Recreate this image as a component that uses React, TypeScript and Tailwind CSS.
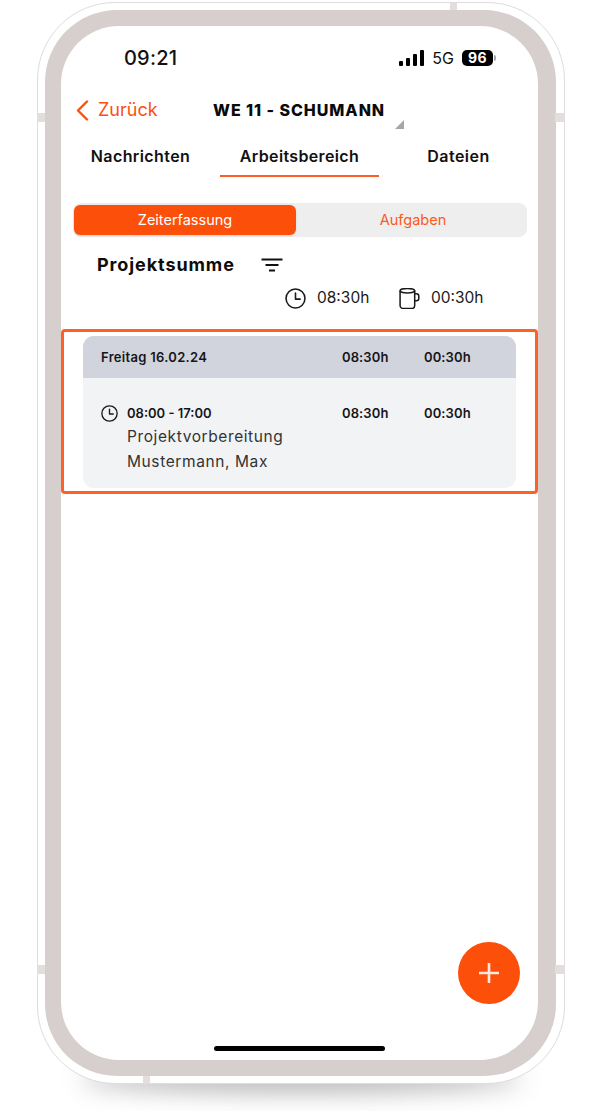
const inter = { fontFamily: 'Inter, "Noto Sans", sans-serif' };

function ClockIcon({ size, stroke = 1.6 }: { size: number; stroke?: number }) {
  return (
    <svg width={size} height={size} viewBox="0 0 20 20" fill="none" stroke="#1a1a1a" strokeWidth={stroke} strokeLinecap="round" strokeLinejoin="round">
      <circle cx="10" cy="10" r="9" />
      <path d="M10 4.8V10.6H14.4" />
    </svg>
  );
}

function MugIcon() {
  return (
    <svg width="21" height="21" viewBox="1 0.8 18.4 19.4" fill="none" stroke="#1a1a1a" strokeWidth="1.4" strokeLinecap="round" strokeLinejoin="round">
      <path d="M1.5 3.6C1.5 2 3.6 1.2 8.2 1.2S15 2 15 3.6V17c0 1.8-1.4 2.8-3.2 2.8H4.7C2.9 19.8 1.5 18.8 1.5 17V3.6Z" />
      <path d="M1.5 3.6C2.6 5 5 5.4 8.2 5.4S13.9 5 15 3.6" />
      <path d="M15 6.2h1.6c1.3 0 2.2.9 2.2 2.2v1.9c0 1.4-.9 2.3-2.2 2.3H15" />
    </svg>
  );
}

function FilterIcon() {
  return (
    <svg width="22" height="14" viewBox="0 0 22 14" fill="none" stroke="#111" strokeWidth="2">
      <path d="M0.5 1.5H21.5M4.5 7H17.5M8 12.5H14" />
    </svg>
  );
}

function SignalIcon() {
  return (
    <svg width="25" height="16" viewBox="0 0 25 16" fill="#000">
      <rect x="0" y="11" width="4" height="5" rx="1" />
      <rect x="7" y="8" width="4" height="8" rx="1" />
      <rect x="14" y="4" width="4" height="12" rx="1" />
      <rect x="21" y="0" width="4" height="16" rx="1" />
    </svg>
  );
}

function Times() {
  return (
    <div className="flex">
      <span className="w-[82px] text-[13px] font-semibold tracking-[0.1px] text-[#16161a]">08:30h</span>
      <span className="w-[92px] text-[13px] font-semibold tracking-[0.1px] text-[#16161a]">00:30h</span>
    </div>
  );
}

export default function App() {
  return (
    <div className="relative h-[1111px] w-[602px] overflow-hidden bg-white" style={inter}>
      {/* shadow under the phone */}
      <div className="absolute left-[80px] top-[1066px] h-[26px] w-[442px] rounded-[50%] bg-[#0000004d] blur-[12px]" />

      <div className="relative ml-[37px] mt-[2px] h-[1082px] w-[528px] rounded-[78px] border border-[#dedcdc] bg-white pb-[7px] pl-[7px] pr-[8px] pt-[7px]">
        {/* antenna bands */}
        <div className="absolute -left-px top-[110px] h-[9px] w-[8px] bg-[#e3dddc]" />
        <div className="absolute -right-px top-[110px] h-[9px] w-[10px] bg-[#e3dddc]" />
        <div className="absolute -left-px top-[962px] h-[9px] w-[8px] bg-[#e3dddc]" />
        <div className="absolute -right-px top-[962px] h-[9px] w-[10px] bg-[#e3dddc]" />
        <div className="absolute left-[412px] -top-px h-[8px] w-[7px] bg-[#e3dddc]" />
        <div className="absolute left-[105px] -bottom-px h-[8px] w-[7px] bg-[#e3dddc]" />

        <div className="h-full rounded-[72px] bg-[#d7cfce] pb-[16px] pl-[16px] pr-[18px] pt-[16px]">
          <div className="relative flex h-full flex-col rounded-[58px] bg-white">
            {/* status bar */}
            <div className="h-[64px] pl-[63px] pr-[42px] pt-[20px]">
              <div className="flex h-[24px] items-center justify-between">
                <span className="text-[20px] font-medium leading-[24px] tracking-[0.2px] text-[#111]">09:21</span>
                <div className="flex items-center">
                  <SignalIcon />
                  <span className="ml-[8px] text-[16px] leading-[18px] text-[#111]">5G</span>
                  <span className="ml-[8px] flex h-[16px] w-[31px] items-center justify-center rounded-[5px] bg-black text-[14px] font-bold leading-none tracking-[0.4px] text-white">96</span>
                  <span className="ml-px h-[6px] w-[2px] rounded-r-full bg-[#a8a8a8]" />
                </div>
              </div>
            </div>

            {/* header */}
            <div className="relative mt-[8px] flex h-[24px] items-center">
              <svg className="ml-[15px]" width="13" height="21" viewBox="0 0 13 21" fill="none" stroke="#fb5012" strokeWidth="2.4" strokeLinecap="round" strokeLinejoin="round">
                <path d="M11 1.5L2 10.5L11 19.5" />
              </svg>
              <span className="ml-[9px] w-[115px] text-[18px] leading-[24px] text-[#fb5012]">Zurück</span>
              <span className="whitespace-nowrap text-[16px] font-extrabold leading-[24px] tracking-[0.95px] text-[#0a0a0a]">WE 11 - SCHUMANN</span>
              <svg className="absolute left-[334px] top-[22px]" width="9" height="9" viewBox="0 0 9 9" fill="#a6a6a6">
                <path d="M9 0V9H0Z" />
              </svg>
            </div>

            {/* tabs */}
            <div className="mt-[13px] grid grid-cols-3">
              <div className="flex h-[42px] items-start justify-center pt-[11px] text-[16px] font-semibold leading-[20px] tracking-[0.4px] text-[#111]">Nachrichten</div>
              <div className="flex h-[42px] items-start justify-center border-b-2 border-[#fb5f27] pt-[11px] text-[16px] font-semibold leading-[20px] tracking-[0.35px] text-[#111]">Arbeitsbereich</div>
              <div className="flex h-[42px] items-start justify-center pt-[11px] text-[16px] font-semibold leading-[20px] tracking-[0.5px] text-[#111]">Dateien</div>
            </div>

            {/* segment control */}
            <div className="ml-[12px] mt-[26px] flex h-[34px] w-[454px] items-center rounded-[8px] bg-[#eeeeee] pl-px">
              <div className="flex h-[30px] w-[222px] items-center justify-center rounded-[6px] bg-[#fc4f0a] text-[14.5px] leading-none text-white shadow-sm">Zeiterfassung</div>
              <div className="flex-1 pl-[3px] text-center text-[14.5px] leading-none text-[#fb5a20]">Aufgaben</div>
            </div>

            {/* summary */}
            <div className="ml-[36px] mt-[17px] flex h-[22px] items-center">
              <span className="w-[164px] text-[18px] font-bold leading-[22px] tracking-[0.9px] text-[#0d0d0d]">Projektsumme</span>
              <FilterIcon />
            </div>
            <div className="ml-[224px] mt-[10px] flex h-[24px] items-center">
              <ClockIcon size={21} stroke={1.5} />
              <span className="ml-[11px] w-[82px] text-[15.5px] leading-[24px] text-[#1a1a1a]">08:30h</span>
              <MugIcon />
              <span className="ml-[11px] text-[15.5px] leading-[24px] text-[#1a1a1a]">00:30h</span>
            </div>

            {/* highlighted day */}
            <div className="mt-[19px] rounded-[4px] border-[3px] border-[#fd6125] pb-[3px] pl-[19px] pr-[19px] pt-[4px]">
              <div className="overflow-hidden rounded-[11px] bg-[#f2f3f5]">
                <div className="flex h-[42px] items-center bg-[#d1d4dc] pl-[18px] pt-[2px]">
                  <span className="w-[241px] text-[13px] font-semibold tracking-[0.3px] text-[#16161a]">Freitag 16.02.24</span>
                  <Times />
                </div>
                <div className="pb-[14px] pl-[18px] pt-[25px]">
                  <div className="flex h-[21px] items-center">
                    <ClockIcon size={17} />
                    <span className="ml-[9px] w-[215px] text-[13px] font-semibold text-[#16161a]">08:00 - 17:00</span>
                    <Times />
                  </div>
                  <div className="ml-[26px] text-[15.5px] leading-[25px] tracking-[0.6px] text-[#333]">
                    <div>Projektvorbereitung</div>
                    <div>Mustermann, Max</div>
                  </div>
                </div>
              </div>
            </div>

            {/* add button */}
            <button className="absolute bottom-[56px] right-[18px] flex h-[62px] w-[62px] items-center justify-center rounded-full bg-[#fc4f0a]">
              <svg width="20" height="20" viewBox="0 0 20 20" stroke="#fde8e0" strokeWidth="2.6">
                <path d="M10 0V20M0 10H20" />
              </svg>
            </button>

            {/* home indicator */}
            <div className="absolute bottom-[9px] left-[153px] h-[5px] w-[171px] rounded-full bg-black" />
          </div>
        </div>
      </div>
    </div>
  );
}
